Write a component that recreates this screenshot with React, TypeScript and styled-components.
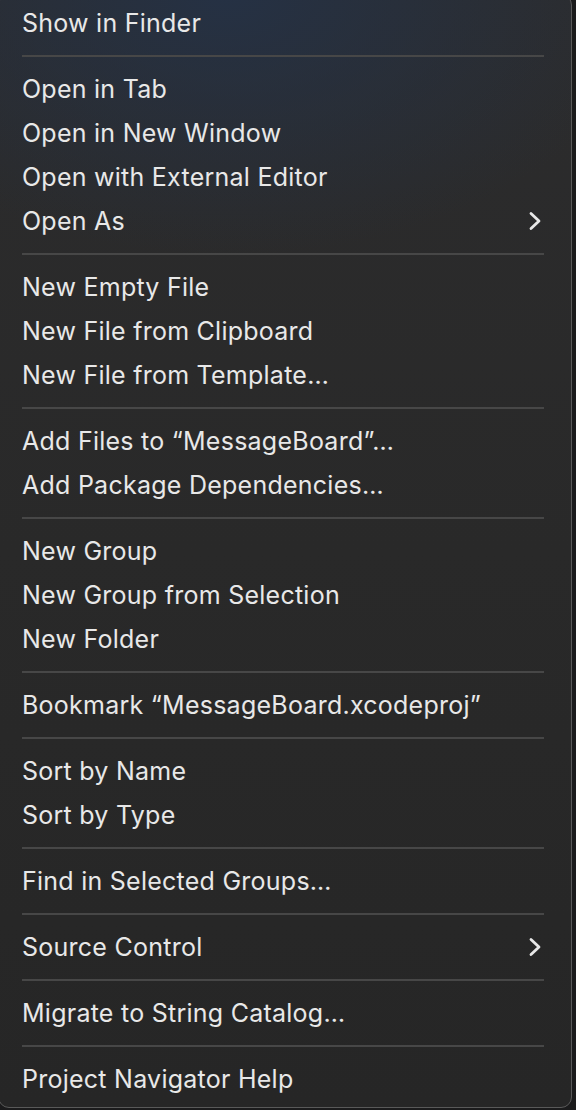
import React from "react";
import styled, { createGlobalStyle } from "styled-components";

const Global = createGlobalStyle`
  html, body { margin: 0; padding: 0; }
  body {
    background: #1b1b1c;
    width: 576px;
    height: 1110px;
    overflow: hidden;
    font-family: Inter, "Noto Sans", sans-serif;
  }
`;

const Menu = styled.div`
  box-sizing: border-box;
  width: 574px;
  margin: -6px 0 0 -2px;
  padding: 6px 0 6px 0;
  border: 1px solid #595959;
  border-radius: 11px;
  background:
    radial-gradient(ellipse 420px 260px at 230px 0px, rgba(36, 50, 72, 0.85), rgba(36, 50, 72, 0) 100%),
    linear-gradient(180deg, #2c2c2d 0%, #292929 50%, #262626 100%);
  color: #e8e8e8;
  display: flex;
  flex-direction: column;
`;

const Item = styled.div`
  height: 44px;
  display: flex;
  align-items: center;
  justify-content: space-between;
  padding: 0 29px 0 23px;
  font-size: 25px;
  letter-spacing: 0.25px;
  font-weight: 400;
  white-space: nowrap;
`;

const Separator = styled.div`
  height: 2px;
  margin: 10px 27px 10px 23px;
  background: #474747;
`;

const Chevron = () => (
  <svg width="14" height="20" viewBox="0 0 14 20" fill="none">
    <path d="M3 2.5 L11 10 L3 17.5" stroke="#e8e8e8" strokeWidth="2.8" strokeLinecap="round" strokeLinejoin="round" />
  </svg>
);

type Entry = { label: string; sub?: boolean } | "sep";

const entries: Entry[] = [
  { label: "Show in Finder" },
  "sep",
  { label: "Open in Tab" },
  { label: "Open in New Window" },
  { label: "Open with External Editor" },
  { label: "Open As", sub: true },
  "sep",
  { label: "New Empty File" },
  { label: "New File from Clipboard" },
  { label: "New File from Template…" },
  "sep",
  { label: "Add Files to “MessageBoard”…" },
  { label: "Add Package Dependencies…" },
  "sep",
  { label: "New Group" },
  { label: "New Group from Selection" },
  { label: "New Folder" },
  "sep",
  { label: "Bookmark “MessageBoard.xcodeproj”" },
  "sep",
  { label: "Sort by Name" },
  { label: "Sort by Type" },
  "sep",
  { label: "Find in Selected Groups…" },
  "sep",
  { label: "Source Control", sub: true },
  "sep",
  { label: "Migrate to String Catalog…" },
  "sep",
  { label: "Project Navigator Help" },
];

export default function App() {
  return (
    <>
      <Global />
      <Menu>
        {entries.map((e, i) =>
          e === "sep" ? (
            <Separator key={i} />
          ) : (
            <Item key={i}>
              <span>{e.label}</span>
              {e.sub && <Chevron />}
            </Item>
          )
        )}
      </Menu>
    </>
  );
}
